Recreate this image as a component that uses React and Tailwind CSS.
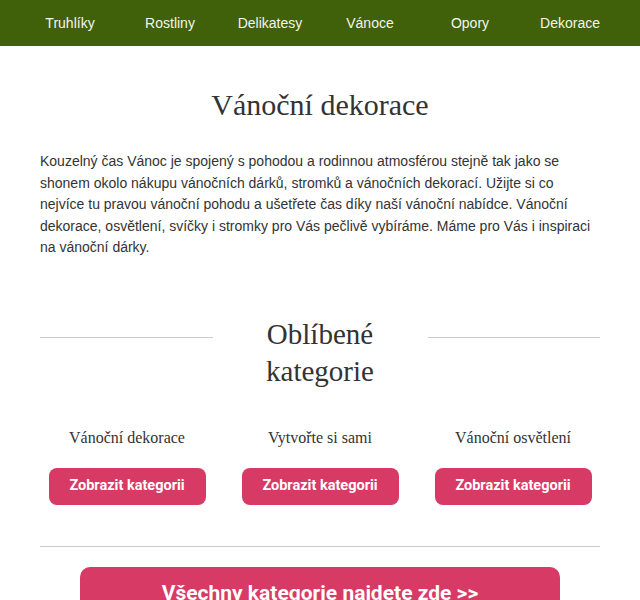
export default function App() {
  const nav = ['Truhlíky', 'Rostliny', 'Delikatesy', 'Vánoce', 'Opory', 'Dekorace']
  const cats = ['Vánoční dekorace', 'Vytvořte si sami', 'Vánoční osvětlení']

  return (
    <div className="min-h-[600px] bg-white font-['Liberation_Sans',sans-serif] text-[#333]">
      {/* navigace */}
      <nav className="bg-[#40600a] h-[46px] px-5 grid grid-cols-6 items-center">
        {nav.map((n) => (
          <a key={n} className="text-center text-[14px] text-[#f4f4ec]">
            {n}
          </a>
        ))}
      </nav>

      <div className="px-10">
        <h1 className="mt-[41px] text-center font-['Liberation_Serif',serif] text-[30px] leading-[36px] text-[#333]">
          Vánoční dekorace
        </h1>

        <p className="mt-[28px] text-[14px] leading-[21.5px] text-[#333]">
          Kouzelný čas Vánoc je spojený s pohodou a rodinnou atmosférou stejně tak jako se shonem okolo
          nákupu vánočních dárků, stromků a vánočních dekorací. Užijte si co nejvíce tu pravou vánoční
          pohodu a ušetřete čas díky naší vánoční nabídce. Vánoční dekorace, osvětlení, svíčky i stromky
          pro Vás pečlivě vybíráme. Máme pro Vás i inspiraci na vánoční dárky.
        </p>

        {/* oblíbené kategorie */}
        <div className="mt-[57px] flex items-start">
          <div className="flex-1 mt-[21px] border-t border-[#ccc]" />
          <h2 className="w-[215px] px-4 text-center font-['Liberation_Serif',serif] text-[29px] leading-[37px] text-[#333]">
            Oblíbené kategorie
          </h2>
          <div className="flex-1 mt-[21px] border-t border-[#ccc]" />
        </div>

        <div className="mt-[38px] grid grid-cols-3 gap-[19px]">
          {cats.map((c) => (
            <div key={c} className="flex flex-col items-center">
              <div className="font-['Liberation_Serif',serif] text-[16px] leading-5 text-[#333]">{c}</div>
              <button className="mt-[20px] w-[157px] h-[37px] rounded-[8px] bg-[#d83a66] text-white font-['Roboto',sans-serif] font-bold text-[14.5px]">
                Zobrazit kategorii
              </button>
            </div>
          ))}
        </div>

        <hr className="mt-[41px] border-t border-[#ccc]" />

        <div className="mt-[20px] flex justify-center">
          <button className="w-[480px] h-[54px] rounded-[10px] bg-[#d83a66] text-white font-['Roboto',sans-serif] font-bold text-[21px]">
            Všechny kategorie najdete zde &gt;&gt;
          </button>
        </div>
      </div>
    </div>
  )
}
